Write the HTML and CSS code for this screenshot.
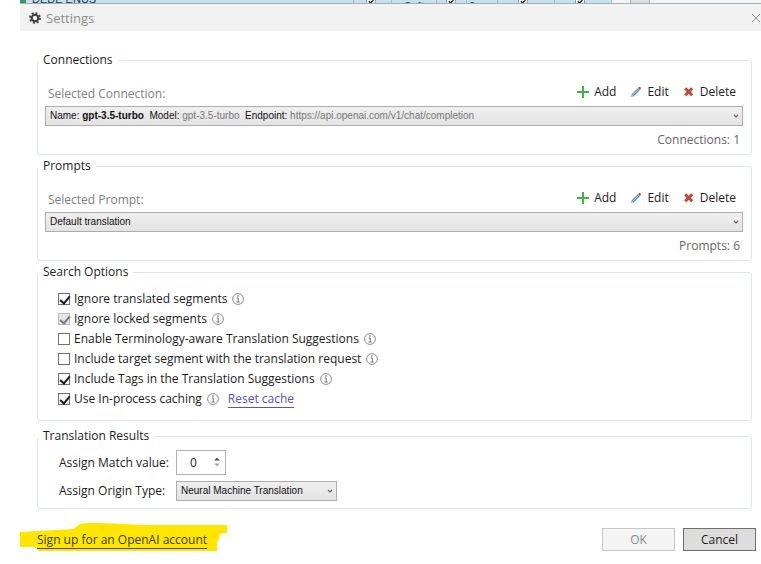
FILE: index.html
```html
<!DOCTYPE html>
<html lang="en">
<head>
<meta charset="utf-8">
<title>Settings</title>
<link rel="stylesheet" href="styles.css">
</head>
<body>
<svg class="sprite" aria-hidden="true">
  <symbol id="plus" viewBox="0 0 12 12"><path d="M6 0v12M0 6h12" stroke="#45b04c" stroke-width="2" fill="none"/></symbol>
  <symbol id="pencil" viewBox="0 0 12 12"><path d="M1.500 8.500L8 2l2 2-6.500 6.500z" fill="#4f86c6"/><path d="M2.600 9.200L8.800 3" stroke="#c9def3" stroke-width=".9"/><path d="M8 2l1-1q.8-.5 1.500.3t.3 1.500L10 4z" fill="#d2473c"/><path d="M.8 11.200l.7-2.700 2 2z" fill="#9fb3c8"/></symbol>
  <symbol id="cross" viewBox="0 0 12 12"><path d="M2.200 2.200l7 7M9.200 2.200l-7 7" stroke="#c4473a" stroke-width="3" fill="none"/></symbol>
  <symbol id="info" viewBox="0 0 12 12"><circle cx="6" cy="6" r="5.400" fill="none" stroke="#808080" stroke-width=".9"/><path d="M4.700 5h1.500v4M4.500 9h3.200" fill="none" stroke="#666" stroke-width=".9"/><circle cx="6" cy="3" r=".8" fill="#555"/></symbol>
  <symbol id="chevron" viewBox="0 0 8 8"><path d="M2 3l2 2 2-2" fill="none" stroke="#666" stroke-width="1.200"/></symbol>
  <symbol id="tick" viewBox="0 0 10 4"><path d="M0 0h10v4H0z" fill="#fff"/><path d="M.5 0v3M9.500 0v3" stroke="#999"/><path d="M3 1l1.500 2L7.500 0" fill="none" stroke="#333" stroke-width="1.500"/></symbol>
</svg>
<div class="strip" aria-hidden="true">
  <span class="cell name">DEDE ENUS</span><span class="cell c1"><svg><use href="#tick"/></svg></span><span class="cell c2">Softw</span><span class="cell c3"><svg><use href="#tick"/></svg></span><span class="cell c4">0</span><span class="cell c5"><svg><use href="#tick"/></svg></span><span class="cell c5"><svg><use href="#tick"/></svg></span><span class="cell end"></span><span class="cell tail"></span>
</div>
<main class="dialog">
  <header class="titlebar">
    <svg class="gear" viewBox="0 0 12 12" aria-hidden="true"><circle cx="6" cy="6" r="3.300" fill="none" stroke="#3c3c3c" stroke-width="2"/><circle cx="6" cy="6" r="5" fill="none" stroke="#3c3c3c" stroke-width="1.800" stroke-dasharray="1.960 1.960"/></svg>
    <h1>Settings</h1>
    <button class="close" type="button" aria-label="Close"><svg viewBox="0 0 10 10"><path d="M1 1l8 8M9 1l-8 8" stroke="#929292" stroke-width="1"/></svg></button>
  </header>
  <form class="content">
    <fieldset class="group picker">
      <legend>Connections</legend>
      <div class="bar">
        <label for="connection">Selected Connection:</label>
        <div class="actions">
          <button type="button"><svg><use href="#plus"/></svg>Add</button>
          <button type="button"><svg><use href="#pencil"/></svg>Edit</button>
          <button type="button"><svg><use href="#cross"/></svg>Delete</button>
        </div>
      </div>
      <div class="combo">
        <select id="connection"><option aria-label="gpt-3.5-turbo"></option></select>
        <div class="value">Name: <b>gpt-3.5-turbo</b>&nbsp; Model: <span>gpt-3.5-turbo</span>&nbsp; Endpoint: <span>https://api.openai.com/v1/chat/completion</span></div>
        <svg><use href="#chevron"/></svg>
      </div>
      <p class="count">Connections: 1</p>
    </fieldset>
    <fieldset class="group picker">
      <legend>Prompts</legend>
      <div class="bar">
        <label for="prompt">Selected Prompt:</label>
        <div class="actions">
          <button type="button"><svg><use href="#plus"/></svg>Add</button>
          <button type="button"><svg><use href="#pencil"/></svg>Edit</button>
          <button type="button"><svg><use href="#cross"/></svg>Delete</button>
        </div>
      </div>
      <div class="combo">
        <select id="prompt"><option>Default translation</option></select>
        <svg><use href="#chevron"/></svg>
      </div>
      <p class="count">Prompts: 6</p>
    </fieldset>
    <fieldset class="group">
      <legend>Search Options</legend>
      <div class="options">
        <div class="option"><label><input type="checkbox" checked>Ignore translated segments</label><svg><use href="#info"/></svg></div>
        <div class="option"><label><input type="checkbox" checked disabled>Ignore locked segments</label><svg><use href="#info"/></svg></div>
        <div class="option"><label><input type="checkbox">Enable Terminology-aware Translation Suggestions</label><svg><use href="#info"/></svg></div>
        <div class="option"><label><input type="checkbox">Include target segment with the translation request</label><svg><use href="#info"/></svg></div>
        <div class="option"><label><input type="checkbox" checked>Include Tags in the Translation Suggestions</label><svg><use href="#info"/></svg></div>
        <div class="option"><label><input type="checkbox" checked>Use In-process caching</label><svg><use href="#info"/></svg><a class="reset" href="#">Reset cache</a></div>
      </div>
    </fieldset>
    <fieldset class="group">
      <legend>Translation Results</legend>
      <div class="fields">
        <label for="match">Assign Match value:</label>
        <div class="spinner">
          <input id="match" type="number" value="0">
          <svg viewBox="0 0 6 10" aria-hidden="true"><path d="M0 3.500L3 .5l3 3z" fill="#555"/><path d="M0 6.500l3 3 3-3z" fill="#aaa"/></svg>
        </div>
        <label for="origin">Assign Origin Type:</label>
        <div class="combo">
          <select id="origin"><option>Neural Machine Translation</option></select>
          <svg><use href="#chevron"/></svg>
        </div>
      </div>
    </fieldset>
    <footer class="footer">
      <div class="signup">
        <svg class="marker" viewBox="0 0 207 29" aria-hidden="true"><path d="M0 10L54 7Q58 1 67 1H80L125 3H207V11L200 12 199 18 197 19V29H18L17 25H0z" fill="#ffe600"/></svg>
        <a href="#">Sign up for an OpenAI account</a>
      </div>
      <button type="button" disabled>OK</button>
      <button type="button">Cancel</button>
    </footer>
  </form>
</main>
</body>
</html>
```
FILE: styles.css
```css
* { box-sizing: border-box; }
body {
  margin: 0;
  background: #fff;
  color: #1c1c1c;
  font: 12px/18px "Open Sans", "Noto Sans", sans-serif;
  overflow-x: hidden;
}
button, input, select { font: inherit; color: inherit; margin: 0; }
svg { display: block; flex: none; }
.sprite { position: absolute; width: 0; height: 0; }

/* bottom edge of the grid behind the dialog */
.strip {
  display: flex;
  height: 4px;
  margin-left: 20px;
  overflow: hidden;
  background: #f3f3f3;
  border-bottom: 1px solid #a3afb8;
  color: #24384c;
  font: 11px/12px "Liberation Sans", sans-serif;
}
.cell { height: 12px; background: #c8dff0; border-right: 1px solid #a9bccb; padding-left: 12px; }
.cell svg { width: 10px; height: 4px; }
.name { width: 334px; margin-top: -8px; height: 18px; line-height: 14px; border-left: 6px solid #2f9a6a; padding-left: 6px; }
.c1 { width: 38px; }
.c2 { width: 45px; }
.c3 { width: 30px; padding-left: 9px; }
.c4 { width: 31px; padding-left: 2px; }
.c5 { width: 57px; padding-left: 20px; }
.end { width: 19px; background: #f3f3f3; }
.tail { width: 19px; background: #ddd; }

.dialog { margin-left: 20px; }
.titlebar { display: flex; align-items: center; height: 27px; padding: 0 0 0 9px; background: #f2f2f2; }
.gear { width: 12px; height: 12px; margin-right: 5px; }
.titlebar h1 { flex: 1; margin: 0; font-size: 13px; font-weight: 400; color: #8c8c8c; }
.close { padding: 0; border: 0; background: none; }
.close svg { width: 10px; height: 10px; }

.content { padding: 20px 9px 0 17px; }
.group { min-width: 0; margin: 0 0 2px; padding: 0 8px 0 7px; border: 1px solid #dde7ee; border-radius: 3px; }
.group legend { padding: 0 5px; margin-left: -7px; }

.picker { padding-top: 13px; padding-bottom: 4px; }
.bar { display: flex; justify-content: space-between; height: 24px; padding: 1px 7px 0 3px; }
.bar label { color: #808080; line-height: 22px; }
.actions { display: flex; align-items: flex-start; gap: 14px; }
.actions button { display: flex; align-items: center; gap: 5px; padding: 0; border: 0; background: none; }
.actions svg { width: 12px; height: 12px; }

.combo { position: relative; font: 10px/12px "Liberation Sans", Arial, sans-serif; color: #111; }
.combo select {
  display: block;
  width: 100%;
  height: 20px;
  padding: 0 16px 0 4px;
  appearance: none;
  border: 1px solid #adadad;
  border-radius: 0;
  background: linear-gradient(#efefef, #e3e3e3);
}
.combo svg { position: absolute; right: 3px; top: 6px; width: 8px; height: 8px; pointer-events: none; }
.value { position: absolute; left: 5px; top: 4px; white-space: nowrap; pointer-events: none; }
.value span { color: #777; }
.count { margin: 4px 3px 0; line-height: 20px; text-align: right; color: #666; }

.options { padding: 8px 13px 11px; }
.option { display: flex; align-items: center; height: 20px; gap: 5px; }
.option label { display: flex; align-items: center; gap: 4px; }
.option svg { width: 12px; height: 12px; }
.option input {
  width: 12px;
  height: 12px;
  appearance: none;
  border: 1px solid #707070;
  background: #fff;
}
.option input:checked::after {
  content: "";
  display: block;
  width: 4px;
  height: 8px;
  margin: 0 0 0 3px;
  border: solid #1c1c1c;
  border-width: 0 2px 2px 0;
  transform: rotate(40deg);
}
.option input:disabled { border-color: #bcbcbc; background-color: #e6e6e6; }
.option input:disabled:checked::after { border-color: #777; }
.reset { margin-left: 4px; line-height: 17px; color: #5550cf; text-decoration: none; border-bottom: 1px solid #5550cf; }

.fields { display: grid; grid-template-columns: 117px 161px; gap: 6px 0; align-items: center; padding: 5px 14px 7px; }
.spinner { position: relative; width: 50px; }
.spinner input {
  display: block;
  width: 100%;
  height: 25px;
  padding: 0 16px 0 1px;
  border: 1px solid #b0b0b0;
  background: #fff;
  text-align: center;
  appearance: textfield;
}
.spinner input::-webkit-inner-spin-button { appearance: none; }
.spinner svg { position: absolute; right: 6px; top: 7px; width: 6px; height: 10px; pointer-events: none; }

.footer { display: flex; align-items: center; gap: 8px; margin: 19px -4px 0 0; }
.signup { position: relative; flex: 1; }
.signup a { position: relative; color: #3b3a12; text-decoration: none; border-bottom: 1px solid #4b4630; }
.marker { position: absolute; left: -17px; top: -9px; width: 207px; height: 29px; }
.footer button { width: 73px; height: 23px; padding: 0; border: 1px solid #707070; background: #ddd; }
.footer button:disabled { border-color: #c4c8c8; background: #f4f4f4; color: #8b8b8b; }

.group:has(.options) { margin-bottom: 6px; }
```
